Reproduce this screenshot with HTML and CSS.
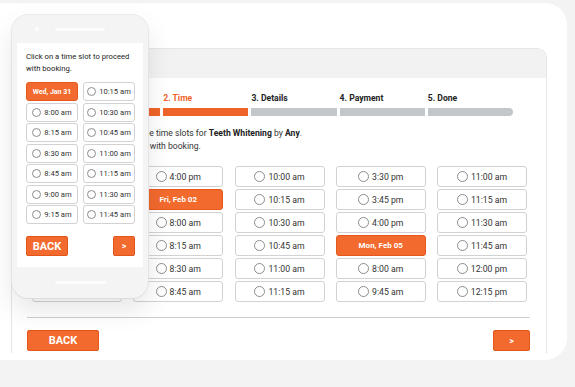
FILE: index.html
```html
<!DOCTYPE html>
<html lang="en">
<head>
    <meta charset="UTF-8">
    <meta name="viewport" content="width=device-width, initial-scale=1.0">
    <title>Booking - Time</title>
    <link rel="stylesheet" href="styles.css">
</head>
<body>
    <div class="card">
        <div class="window">
            <div class="window-head"></div>
            <div class="window-body">
                <div class="steps">
                    <div class="step on"><span>1. Service</span><i></i></div>
                    <div class="step on"><span>2. Time</span><i></i></div>
                    <div class="step"><span>3. Details</span><i></i></div>
                    <div class="step"><span>4. Payment</span><i></i></div>
                    <div class="step"><span>5. Done</span><i></i></div>
                </div>

                <p class="intro">
                    Below you can find the available time slots for <b>Teeth Whitening</b> by <b>Any</b>.<br>
                    Click on a time slot to proceed with booking.
                </p>

                <div class="slots">
                    <div class="col">
                        <div class="slot"><i></i>3:00 pm</div>
                        <div class="slot"><i></i>3:15 pm</div>
                        <div class="slot"><i></i>3:30 pm</div>
                        <div class="slot"><i></i>3:45 pm</div>
                        <div class="slot"><i></i>4:00 pm</div>
                        <div class="slot"><i></i>4:15 pm</div>
                    </div>
                    <div class="col">
                        <div class="slot"><i></i>4:00 pm</div>
                        <div class="slot day">Fri, Feb 02</div>
                        <div class="slot"><i></i>8:00 am</div>
                        <div class="slot"><i></i>8:15 am</div>
                        <div class="slot"><i></i>8:30 am</div>
                        <div class="slot"><i></i>8:45 am</div>
                    </div>
                    <div class="col">
                        <div class="slot"><i></i>10:00 am</div>
                        <div class="slot"><i></i>10:15 am</div>
                        <div class="slot"><i></i>10:30 am</div>
                        <div class="slot"><i></i>10:45 am</div>
                        <div class="slot"><i></i>11:00 am</div>
                        <div class="slot"><i></i>11:15 am</div>
                    </div>
                    <div class="col">
                        <div class="slot"><i></i>3:30 pm</div>
                        <div class="slot"><i></i>3:45 pm</div>
                        <div class="slot"><i></i>4:00 pm</div>
                        <div class="slot day">Mon, Feb 05</div>
                        <div class="slot"><i></i>8:00 am</div>
                        <div class="slot"><i></i>9:45 am</div>
                    </div>
                    <div class="col">
                        <div class="slot"><i></i>11:00 am</div>
                        <div class="slot"><i></i>11:15 am</div>
                        <div class="slot"><i></i>11:30 am</div>
                        <div class="slot"><i></i>11:45 am</div>
                        <div class="slot"><i></i>12:00 pm</div>
                        <div class="slot"><i></i>12:15 pm</div>
                    </div>
                </div>

                <div class="footer">
                    <button class="btn">BACK</button>
                    <button class="btn next">&gt;</button>
                </div>
            </div>
        </div>
    </div>

    <!-- phone mockup lying over the desktop widget -->
    <div class="phone">
        <div class="phone-top"><span class="camera"></span><span class="speaker"></span></div>
        <div class="screen">
            <p class="m-intro">Click on a time slot to proceed with booking.</p>
            <div class="m-slots">
                <div class="m-slot day">Wed, Jan 31</div>
                <div class="m-slot"><i></i>10:15 am</div>
                <div class="m-slot"><i></i>8:00 am</div>
                <div class="m-slot"><i></i>10:30 am</div>
                <div class="m-slot"><i></i>8:15 am</div>
                <div class="m-slot"><i></i>10:45 am</div>
                <div class="m-slot"><i></i>8:30 am</div>
                <div class="m-slot"><i></i>11:00 am</div>
                <div class="m-slot"><i></i>8:45 am</div>
                <div class="m-slot"><i></i>11:15 am</div>
                <div class="m-slot"><i></i>9:00 am</div>
                <div class="m-slot"><i></i>11:30 am</div>
                <div class="m-slot"><i></i>9:15 am</div>
                <div class="m-slot"><i></i>11:45 am</div>
            </div>
            <div class="m-buttons">
                <button class="btn m-back">BACK</button>
                <button class="btn m-next">&gt;</button>
            </div>
        </div>
        <div class="home-bar"></div>
    </div>
</body>
</html>
```

FILE: styles.css
```css
body {
    margin: 0;
    width: 575px;
    height: 387px;
    overflow: hidden;
    position: relative;
    background-color: #f3f3f3;
    font-family: Roboto, "Liberation Sans", Arial, sans-serif;
    color: #333;
}

.card {
    margin: 3px 8px 0 -20px;
    height: 357px;
    box-sizing: border-box;
    padding: 45px 20px 0 31px;
    background-color: #fff;
    border-radius: 22px;
    overflow: hidden;
}

.window {
    height: 305px;
    box-sizing: border-box;
    border: 1px solid #e6e6e6;
    border-bottom: none;
    border-radius: 10px 10px 0 0;
}

.window-head {
    height: 29px;
    background-color: #f2f2f2;
    border-radius: 9px 9px 0 0;
}

.window-body {
    padding: 15px 16px 0 15px;
}

/* Progress steps */
.steps {
    display: flex;
    gap: 3px;
    margin: 0 17px 0 48px;
}

.step {
    flex: 1;
}

.step span {
    display: block;
    font-size: 8.6px;
    font-weight: 700;
    line-height: 10px;
    color: #222;
}

.step i {
    display: block;
    height: 8px;
    margin-top: 5px;
    background-color: #c4c7ca;
}

.step.on span {
    color: #f0642a;
}

.step.on i {
    background-color: #f0642a;
}

.step:last-child i {
    border-radius: 0 4px 4px 0;
}

.intro {
    margin: 11px 0 0 5px;
    font-size: 8.6px;
    line-height: 13px;
    color: #333;
    white-space: nowrap;
}

.intro b {
    color: #222;
}

/* Time slots */
.slots {
    display: grid;
    grid-template-columns: repeat(5, 90px);
    column-gap: 11.25px;
    margin: 13px 3px 0 5px;
}

.col {
    display: flex;
    flex-direction: column;
    gap: 2px;
}

.slot {
    height: 21px;
    box-sizing: border-box;
    display: flex;
    align-items: center;
    justify-content: center;
    gap: 3px;
    border: 1px solid #d2d2d2;
    border-radius: 3px;
    background-color: #fff;
    font-size: 8.7px;
    color: #333;
}

.slot i,
.m-slot i {
    width: 11px;
    height: 11px;
    box-sizing: border-box;
    border: 1px solid #8c8c8c;
    border-radius: 50%;
    background-color: #fff;
}

.slot.day,
.m-slot.day {
    background-color: #f26a2e;
    border-color: #e5571d;
    color: #fff;
    font-weight: 700;
}

.slot.day {
    font-size: 8px;
}

.footer {
    margin-top: 15px;
    padding-top: 12px;
    border-top: 1px solid #cfcfcf;
    display: flex;
    justify-content: space-between;
}

.btn {
    width: 72px;
    height: 21px;
    padding: 0;
    border: 1px solid #e2561c;
    border-radius: 2px;
    background-color: #f26a2e;
    color: white;
    font-family: Roboto, "Liberation Sans", Arial, sans-serif;
    font-size: 11px;
    font-weight: 700;
    cursor: pointer;
}

.btn.next {
    width: 37px;
    font-size: 9px;
}

/* Phone mockup */
.phone {
    position: absolute;
    left: 12px;
    top: 15px;
    width: 136px;
    height: 283px;
    box-sizing: border-box;
    padding: 0 5px;
    background-color: #f4f4f4;
    border-radius: 16px;
    box-shadow: 0 12px 26px rgba(0, 0, 0, 0.1), 0 0 0 1px #efefef;
}

.phone-top {
    height: 28px;
    display: flex;
    align-items: center;
    padding-left: 18px;
}

.camera {
    width: 4px;
    height: 4px;
    border-radius: 50%;
    background-color: #fcfcfc;
    margin-right: 16px;
}

.speaker {
    width: 50px;
    height: 3px;
    border-radius: 2px;
    background-color: #fcfcfc;
}

.screen {
    height: 224px;
    box-sizing: border-box;
    padding: 8px 8px 0 9px;
    background-color: #fff;
}

.m-intro {
    margin: 0;
    font-size: 7.7px;
    line-height: 12px;
    color: #222;
}

.m-slots {
    display: grid;
    grid-template-columns: 52px 52px;
    gap: 1.5px 5px;
    margin-top: 7px;
}

.m-slot {
    height: 19px;
    box-sizing: border-box;
    display: flex;
    align-items: center;
    justify-content: center;
    gap: 3px;
    border: 1px solid #d2d2d2;
    border-radius: 3px;
    font-size: 7.6px;
    color: #333;
}

.m-slot i {
    width: 9px;
    height: 9px;
}

.m-slot.day {
    font-size: 7px;
}

.m-buttons {
    display: flex;
    justify-content: space-between;
    margin-top: 12px;
}

.m-back {
    width: 42px;
    height: 20px;
}

.m-next {
    width: 22px;
    height: 20px;
    font-size: 9px;
}

.home-bar {
    width: 51px;
    height: 3px;
    margin: 14px auto 0;
    border-radius: 2px;
    background-color: #fcfcfc;
}
```
